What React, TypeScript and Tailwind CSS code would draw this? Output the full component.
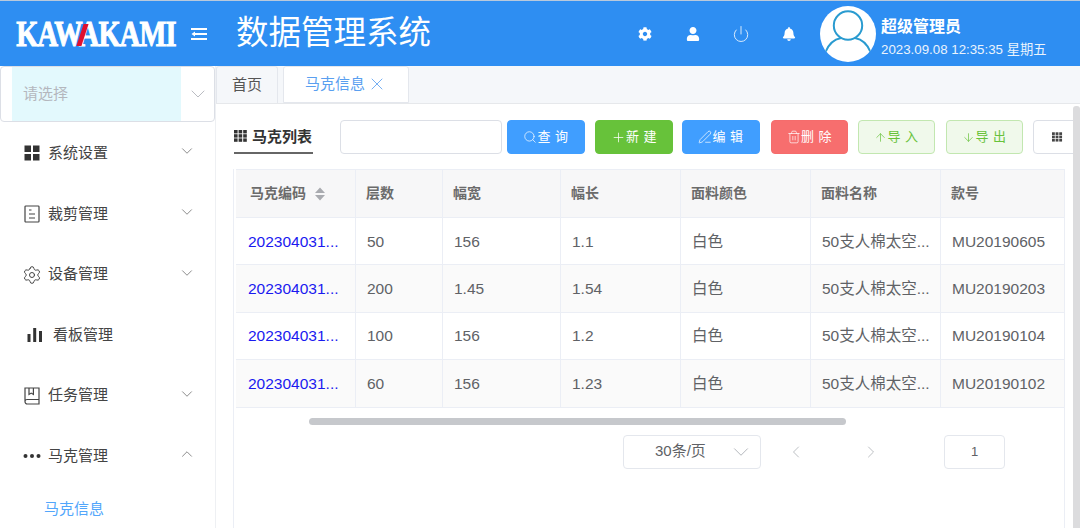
import React from "react";
import { ChevronDown, ChevronUp, ChevronLeft, ChevronRight, X, Search, Plus, Trash2, ArrowUp, ArrowDown, Power, Settings, PenLine } from "lucide-react";
import { FaBell, FaCog, FaUser } from "react-icons/fa";

const FONT = "font-['Liberation_Sans','Noto_Sans_CJK_SC',sans-serif]";

function GridIcon({ className = "" }: { className?: string }) {
  return (
    <svg viewBox="0 0 14 12" className={className} fill="currentColor">
      {[0, 4.6, 9.2].map((x) =>
        [0, 4.2, 8.4].map((y) => <rect key={`${x}-${y}`} x={x} y={y} width="3.6" height="3.4" />)
      )}
    </svg>
  );
}

function Squares() {
  return (
    <svg viewBox="0 0 16 16" className="h-4 w-4 text-[#333]" fill="currentColor">
      <rect x="0.5" y="0.5" width="6.5" height="6.5" />
      <rect x="9" y="0.5" width="6.5" height="6.5" />
      <rect x="0.5" y="9" width="6.5" height="6.5" />
      <rect x="9" y="9" width="6.5" height="6.5" />
    </svg>
  );
}

function Doc() {
  return (
    <svg viewBox="0 0 16 18" className="h-[18px] w-4 text-[#444]" fill="none" stroke="currentColor" strokeWidth="1.2">
      <rect x="1" y="1" width="14" height="16" rx="0.8" />
      <path d="M5 5h2.5M5 9h6M5 13h6" />
    </svg>
  );
}

function Bars() {
  return (
    <svg viewBox="0 0 16 16" className="h-4 w-4 text-[#333]" fill="currentColor">
      <rect x="0.5" y="7" width="3" height="8" />
      <rect x="6.2" y="1" width="3" height="14" />
      <rect x="12" y="4" width="3" height="11" />
    </svg>
  );
}

function Book() {
  return (
    <svg viewBox="0 0 16 18" className="h-[18px] w-4 text-[#444]" fill="none" stroke="currentColor" strokeWidth="1.2">
      <path d="M1 14.5V1h14v16H3.2C2 17 1 16 1 14.5c0-1.2 1-2 2.2-2H15" />
      <path d="M5 1v6.5l2.2-1.4 2.2 1.4V1" />
    </svg>
  );
}

function Dots() {
  return (
    <svg viewBox="0 0 18 6" className="h-[6px] w-[18px] text-[#333]" fill="currentColor">
      <circle cx="2.5" cy="3" r="2" />
      <circle cx="9" cy="3" r="2" />
      <circle cx="15.5" cy="3" r="2" />
    </svg>
  );
}

function Avatar() {
  return (
    <svg viewBox="0 0 56 56" className="h-14 w-14 shrink-0 rounded-full bg-white">
      <circle cx="28" cy="19.5" r="14.2" fill="none" stroke="#2a9bd0" strokeWidth="2" />
      <path d="M5.5 46C9 37 16 33 21 32M50.5 46C47 37 40 33 35 32" fill="none" stroke="#2a9bd0" strokeWidth="2" />
    </svg>
  );
}

const menu = [
  { label: "系统设置", icon: <Squares />, chevron: "down", h: "h-[62px]" },
  { label: "裁剪管理", icon: <Doc />, chevron: "down", h: "h-[60px]" },
  { label: "设备管理", icon: <Settings size={20} strokeWidth={1.2} className="shrink-0 text-[#444]" />, chevron: "down", h: "h-[61px]" },
  { label: "看板管理", icon: <Bars />, chevron: "", h: "h-[60px]" },
  { label: "任务管理", icon: <Book />, chevron: "down", h: "h-[61px]" },
  { label: "马克管理", icon: <Dots />, chevron: "up", h: "h-[60px]" },
];

const columns = ["马克编码", "层数", "幅宽", "幅长", "面料颜色", "面料名称", "款号"];
const widths = ["w-[119.5px]", "w-[87px]", "w-[118px]", "w-[120px]", "w-[130px]", "w-[130px]", "w-[124px]"];
const rows = [
  ["202304031...", "50", "156", "1.1", "白色", "50支人棉太空...", "MU20190605"],
  ["202304031...", "200", "1.45", "1.54", "白色", "50支人棉太空...", "MU20190203"],
  ["202304031...", "100", "156", "1.2", "白色", "50支人棉太空...", "MU20190104"],
  ["202304031...", "60", "156", "1.23", "白色", "50支人棉太空...", "MU20190102"],
];

function Btn({ className, icon, children }: { className: string; icon: React.ReactNode; children: React.ReactNode }) {
  return (
    <div className={`flex h-[34px] shrink-0 items-center justify-center rounded-[4px] border text-[13px] tracking-[0.5px] ${className}`}>
      {icon}
      <span className="whitespace-pre">{children}</span>
    </div>
  );
}

export default function App() {
  return (
    <div className={`${FONT} flex h-[528px] w-[1080px] flex-col overflow-hidden bg-white text-[#606266]`}>
      <div className="h-px shrink-0 bg-[#b9c9dc]" />
      <header className="flex h-[65px] shrink-0 items-center bg-[#2e8ef2] text-white">
        <div className="relative ml-[17px] flex h-[26px] w-[158px] items-center justify-center font-['Liberation_Serif',serif] text-[36px] font-bold leading-none">
          <span className="inline-block scale-x-[0.79] whitespace-nowrap tracking-[-1px] [-webkit-text-stroke:1px_white]">KAWAKAMI</span>
          <span className="absolute left-[63px] top-[3px] h-[22px] w-[5px] -skew-x-[18deg] bg-[#e0102e]" />
        </div>
        <svg viewBox="0 0 18 14" className="ml-[15px] h-[14px] w-[18px]" fill="none" stroke="currentColor" strokeWidth="2">
          <path d="M1 2h16M5 7h12M1 12h16" />
          <path d="M5 4.5 1.5 7 5 9.5z" fill="currentColor" stroke="none" />
        </svg>
        <div className="ml-[28px] w-[199px] whitespace-nowrap text-[32.5px] leading-none">数据管理系统</div>
        <div className="ml-[186px] flex items-center">
          <span className="flex w-[48px] justify-center"><FaCog size={14} /></span>
          <span className="flex w-[48px] justify-center"><FaUser size={14} /></span>
          <span className="flex w-[48px] justify-center"><Power size={18} strokeWidth={1.3} className="text-[#dcebfb]" /></span>
          <span className="flex w-[48px] justify-center"><FaBell size={14} /></span>
        </div>
        <div className="ml-[7px] flex items-center">
          <Avatar />
          <div className="ml-[5px] mt-[8px] flex flex-col">
            <div className="whitespace-nowrap text-[16px] font-bold leading-[22px]">超级管理员</div>
            <div className="mt-[2px] whitespace-nowrap text-[13.3px] leading-[20px] text-[#eaf3fd]">2023.09.08 12:35:35 星期五</div>
          </div>
        </div>
      </header>
      <div className="flex min-h-0 flex-1">
        <aside className="flex w-[216px] shrink-0 flex-col border-r border-[#eef0f3] bg-white">
          <div className="flex h-[56px] shrink-0 rounded-[4px] border border-[#dcdfe6] bg-white pl-[11px]">
            <div className="flex w-[169px] items-center bg-[#e3f9fd] pl-[11px] text-[15px] text-[#b4b7bd]">请选择</div>
            <div className="flex flex-1 items-center justify-center">
              <ChevronDown size={24} strokeWidth={0.8} className="text-[#a8abb2]" />
            </div>
          </div>
          {menu.map((m, i) => (
            <div key={m.label} className={`flex ${m.h} shrink-0 items-center pl-[23px] pr-[19px] text-[15px] text-[#444]`}>
              <span className={`flex w-[18px] justify-center ${i === 3 ? "ml-[3px] mr-[2px]" : ""}`}>{m.icon}</span>
              <span className="ml-[7px]">{m.label}</span>
              <span className="ml-auto -translate-y-[2px]">
                {m.chevron === "down" && <ChevronDown size={18} strokeWidth={1} className="text-[#666]" />}
                {m.chevron === "up" && <ChevronUp size={18} strokeWidth={1} className="text-[#666]" />}
              </span>
            </div>
          ))}
          <div className="pl-[44px] pt-[12px] text-[15px] text-[#52a6fb]">马克信息</div>
        </aside>
        <main className="flex min-w-0 flex-1 flex-col bg-[#f5f7fa]">
          <div className="flex h-[37px] shrink-0 items-stretch">
            <div className="flex w-[62px] items-center justify-center rounded-t-[3px] border border-b-0 border-[#e4e7ed] text-[15px] text-[#555]">首页</div>
            <div className="ml-[5px] flex w-[126px] items-center rounded-t-[3px] border border-[#e4e7ed] bg-white pl-[21px] text-[15px] text-[#5a9ff0]">
              马克信息
              <X size={20} strokeWidth={1} className="ml-[2px] -translate-y-px" />
            </div>
          </div>
          <div className="flex min-h-0 flex-1 border-t border-[#e6e8eb] bg-white">
            <div className="min-w-0 flex-1 overflow-hidden pl-[18px] pt-[16px]">
              <div className="flex h-[34px] items-start">
                <div className="flex h-[34px] w-[79px] shrink-0 items-center gap-[4px] border-b-2 border-[#666] text-[15px] font-bold leading-none text-[#333]">
                  <GridIcon className="h-[12px] w-[14px] shrink-0 text-[#333]" />
                  <span className="whitespace-nowrap">马克列表</span>
                </div>
                <div className="ml-[27px] h-[34px] w-[162px] shrink-0 rounded-[4px] border border-[#dcdfe6]" />
                <div className="ml-[5px] flex shrink-0 items-center">
                  <Btn className="w-[78px] border-[#409eff] bg-[#409eff] text-white" icon={<Search size={14} strokeWidth={1.2} />}>查 询</Btn>
                  <Btn className="ml-[10px] w-[78px] border-[#67c23a] bg-[#67c23a] text-white" icon={<Plus size={15} strokeWidth={1.2} />}>新 建</Btn>
                  <Btn className="ml-[9px] w-[78px] border-[#409eff] bg-[#409eff] text-white" icon={<PenLine size={14} strokeWidth={1.2} />}>编 辑</Btn>
                  <Btn className="ml-[11px] w-[77px] border-[#f56c6c] bg-[#f76e6e] text-white" icon={<Trash2 size={14} strokeWidth={1.2} />}>删 除</Btn>
                  <Btn className="ml-[10px] w-[77px] border-[#c2e7b0] bg-[#f0f9eb] text-[#67c23a]" icon={<ArrowUp size={13} strokeWidth={1.3} />}>导 入</Btn>
                  <Btn className="ml-[11px] w-[77px] border-[#c2e7b0] bg-[#f0f9eb] text-[#67c23a]" icon={<ArrowDown size={13} strokeWidth={1.3} />}>导 出</Btn>
                  <div className="ml-[10px] flex h-[34px] w-[60px] shrink-0 items-center rounded-[4px] border border-[#dcdfe6] pl-[18px]">
                    <GridIcon className="h-[10px] w-[11px] text-[#444]" />
                  </div>
                </div>
              </div>
              <div className="relative -ml-px mt-[15px] w-[832px] border-x border-[#ebeef5] pb-[140px] pl-[2px]">
                <table className="w-[828.5px] table-fixed border-collapse text-[15.5px]">
                  <thead>
                    <tr className="h-[48px] bg-[#f7f7f8] text-left text-[14px] font-bold text-[#6b6b6b]">
                      {columns.map((c, i) => (
                        <th key={c} className={`${widths[i]} border border-l-0 border-[#ebeef5] font-bold ${i === 0 ? "pl-[14px]" : "pl-[10px]"}`}>
                          <span className="flex items-center">
                            {c}
                            {i === 0 && (
                              <svg viewBox="0 0 10 14" className="ml-[9px] h-[14px] w-[10px]" fill="#a9abb0">
                                <path d="M5 0.5 10 6H0zM5 13.5 0 8h10z" />
                              </svg>
                            )}
                          </span>
                        </th>
                      ))}
                    </tr>
                  </thead>
                  <tbody>
                    {rows.map((r, ri) => (
                      <tr key={ri} className={`h-[47.4px] ${ri % 2 === 1 ? "bg-[#fafafa]" : "bg-white"}`}>
                        {r.map((v, i) => (
                          <td key={i} className={`border border-l-0 border-[#ebeef5] whitespace-nowrap ${i === 0 ? "pl-[12px] text-[#1a1af0]" : "pl-[11px] text-[#606266]"}`}>
                            {v}
                          </td>
                        ))}
                      </tr>
                    ))}
                  </tbody>
                </table>
                <div className="ml-[73px] mt-[10px] h-[7px] w-[537px] rounded-full bg-[#c6c8cc]" />
                <div className="mt-[10px] flex items-center pl-[387px] text-[#606266]">
                  <div className="flex h-[34px] w-[138px] shrink-0 items-center justify-between rounded-[4px] border border-[#e4e7ed] pl-[31px] pr-[6px] text-[15px]">
                    30条/页
                    <ChevronDown size={26} strokeWidth={0.8} className="text-[#a8abb2]" />
                  </div>
                  <ChevronLeft size={20} strokeWidth={1} className="ml-[25px] shrink-0 text-[#b0b3b8]" />
                  <ChevronRight size={20} strokeWidth={1} className="ml-[55px] shrink-0 text-[#b0b3b8]" />
                  <div className="ml-[63px] flex h-[34px] w-[61px] shrink-0 items-center justify-center rounded-[4px] border border-[#e4e7ed] text-[13px]">1</div>
                </div>
              </div>
            </div>
            <div className="mt-[2px] w-[7px] shrink-0 rounded-t-[3px] bg-[#dcdcde]" />
          </div>
        </main>
      </div>
    </div>
  );
}
